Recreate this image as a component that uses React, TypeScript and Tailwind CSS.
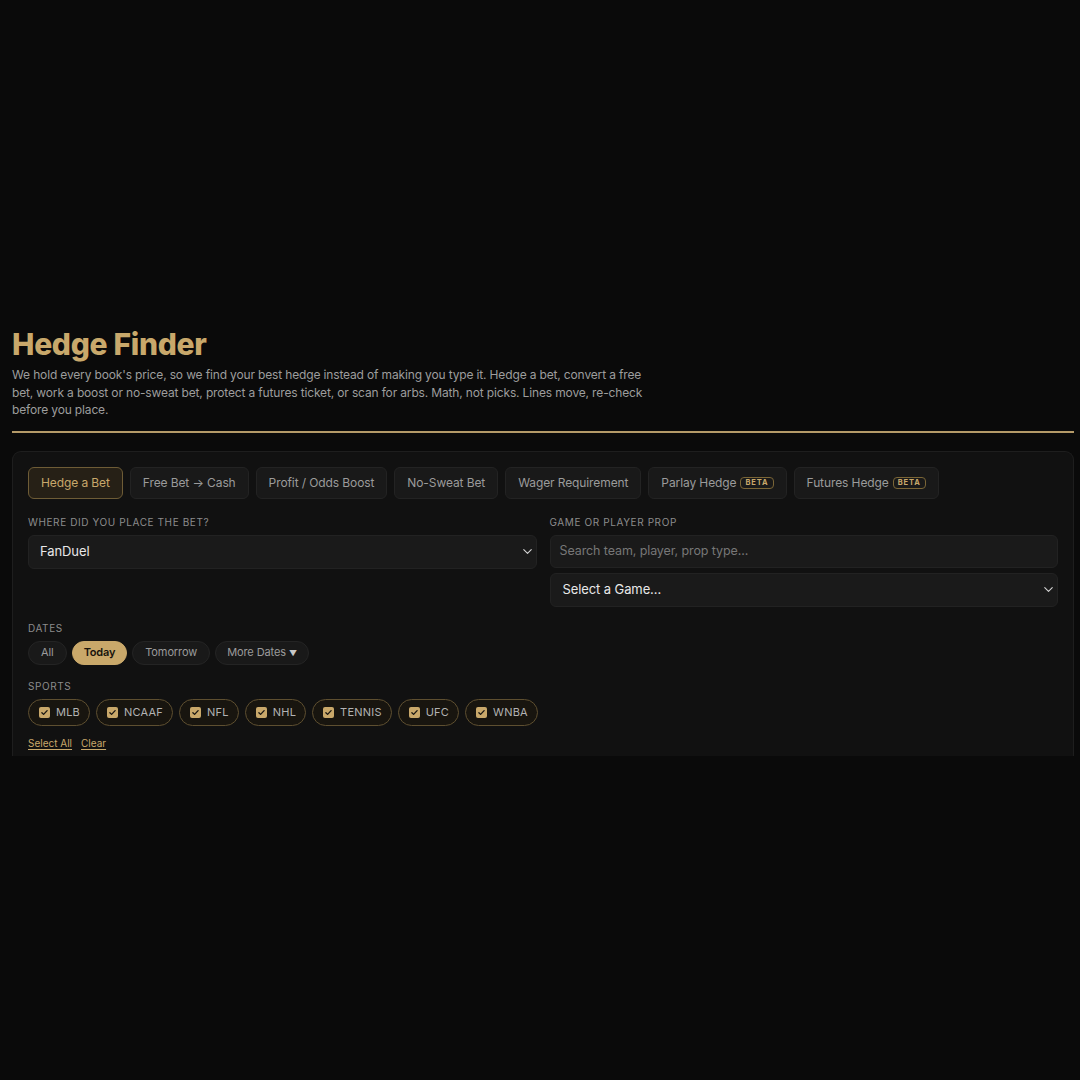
import { ChevronDown } from 'lucide-react'

const tabs = [
  { label: 'Hedge a Bet', active: true },
  { label: 'Free Bet → Cash' },
  { label: 'Profit / Odds Boost' },
  { label: 'No-Sweat Bet' },
  { label: 'Wager Requirement' },
  { label: 'Parlay Hedge', beta: true },
  { label: 'Futures Hedge', beta: true },
]

const dates = ['All', 'Today', 'Tomorrow']
const sports = ['MLB', 'NCAAF', 'NFL', 'NHL', 'TENNIS', 'UFC', 'WNBA']

function Label({ children }: { children: React.ReactNode }) {
  return (
    <div className="mb-[6px] text-[10px] uppercase leading-[14px] tracking-[0.06em] text-[#8c8c8c]">{children}</div>
  )
}

function Check() {
  return (
    <span className="flex h-[11px] w-[11px] shrink-0 items-center justify-center rounded-[2px] bg-[#c9a86a]">
      <svg width="9" height="9" viewBox="0 0 12 12" fill="none">
        <path d="M2.5 6.2l2.3 2.3 4.7-5" stroke="#1a1712" strokeWidth="1.8" strokeLinecap="round" strokeLinejoin="round" />
      </svg>
    </span>
  )
}

export default function App() {
  return (
    <div className="min-h-[1080px] bg-[#0a0a0a] pl-3 pr-[6px] pt-[326px] font-['Inter',sans-serif] text-[#e5e5e5]">
      <h1 className="text-[30px] font-extrabold leading-[36px] tracking-[-0.01em] text-[#c8a86b]">Hedge Finder</h1>
      <p className="mt-[4px] max-w-[642px] text-[12px] leading-[17.5px] tracking-[-0.15px] text-[#9d9d9d]">
        We hold every book's price, so we find your best hedge instead of making you type it. Hedge a bet, convert a free
        bet, work a boost or no-sweat bet, protect a futures ticket, or scan for arbs. Math, not picks. Lines move, re-check
        before you place.
      </p>
      <div className="mt-[12px] h-[2px] bg-[#b49a68]" />

      {/* main card, cut off at the bottom like the capture */}
      <div className="mt-[18px] h-[305px] overflow-hidden rounded-t-[9px] border border-b-0 border-[#1e1e1e] bg-[#111111] px-[15px] pt-[15px]">
        <div className="flex gap-[7px]">
          {tabs.map((t) => (
            <button
              key={t.label}
              className={`flex h-[32px] items-center gap-[4px] rounded-[6px] border px-[12px] text-[12px] tracking-[-0.1px] ${
                t.active
                  ? 'border-[#6e5c36] bg-[#262016] text-[#c8a86b]'
                  : 'border-[#232323] bg-[#191919] text-[#9b9b9b]'
              }`}
            >
              {t.label}
              {t.beta && (
                <span className="rounded-[4px] border border-[#7a6536] px-[4px] text-[7.5px] font-bold leading-[10px] tracking-[0.12em] text-[#c8a86b]">
                  BETA
                </span>
              )}
            </button>
          ))}
        </div>

        <div className="mt-[16px] grid grid-cols-2 gap-[13px]">
          <div>
            <Label>Where did you place the bet?</Label>
            <div className="flex h-[34px] items-center justify-between rounded-[6px] border border-[#222222] bg-[#1a1a1a] pl-[11px] pr-[1px] text-[13px] tracking-[-0.1px] text-[#e8e8e8]">
              FanDuel
              <ChevronDown size={15} strokeWidth={1.75} className="text-[#d4d4d4]" />
            </div>
          </div>
          <div>
            <Label>Game or player prop</Label>
            <div className="flex h-[33px] items-center rounded-[6px] border border-[#222222] bg-[#1a1a1a] px-[9px] text-[12.5px] tracking-[-0.1px] text-[#777777]">
              Search team, player, prop type...
            </div>
            <div className="mt-[5px] flex h-[34px] items-center justify-between rounded-[6px] border border-[#222222] bg-[#1a1a1a] pl-[12px] pr-[1px] text-[13px] tracking-[-0.1px] text-[#e8e8e8]">
              Select a Game...
              <ChevronDown size={15} strokeWidth={1.75} className="text-[#d4d4d4]" />
            </div>
          </div>
        </div>

        <div className="mt-[14px]">
          <Label>Dates</Label>
          <div className="flex gap-[5px]">
            {dates.map((d) => (
              <span
                key={d}
                className={`flex h-[24px] items-center rounded-full border text-[11px] ${
                  d === 'Today'
                    ? 'border-[#c9a86a] bg-[#c9a86a] px-[11px] font-semibold tracking-[-0.2px] text-[#17130c]'
                    : 'border-[#242424] bg-[#191919] px-[12px] tracking-[-0.1px] text-[#9b9b9b]'
                }`}
              >
                {d}
              </span>
            ))}
            <span className="flex h-[24px] items-center gap-[3px] rounded-full border border-[#242424] bg-[#191919] px-[11px] text-[11px] tracking-[-0.1px] text-[#9b9b9b]">
              More Dates <span className="text-[8px] text-[#c8c8c8]">▼</span>
            </span>
          </div>
        </div>

        <div className="mt-[14px]">
          <Label>Sports</Label>
          <div className="flex gap-[6px]">
            {sports.map((s) => (
              <span
                key={s}
                className="flex h-[27px] items-center gap-[6px] rounded-full border border-[#5e4f30] bg-[#18150f] pl-[10px] pr-[9px] text-[11px] tracking-[0.02em] text-[#b3b3b3]"
              >
                <Check />
                {s}
              </span>
            ))}
          </div>
          <div className="mt-[10px] flex gap-[9px] text-[10px] text-[#c8a86b]">
            <span className="underline underline-offset-2">Select All</span>
            <span className="underline underline-offset-2">Clear</span>
          </div>
        </div>
      </div>
    </div>
  )
}
